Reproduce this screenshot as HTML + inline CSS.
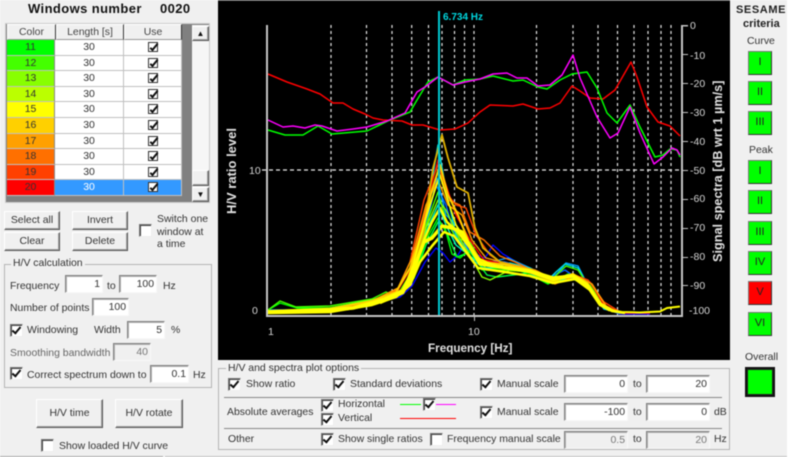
<!DOCTYPE html>
<html><head><meta charset="utf-8"><style>
html,body{margin:0;padding:0;background:#fff}
#p{position:relative;width:787px;height:457px;background:#f0f0f0;overflow:hidden;font:10.45px/14px "Liberation Sans",sans-serif;color:#333;filter:blur(.45px)}
#w{position:absolute;left:0;top:0;width:800px;height:457px;overflow:hidden}
.t{position:absolute;white-space:nowrap;margin-top:2px}
.g{color:#666}
.b{position:absolute;box-sizing:border-box;background:#f0f0f0;border:1px solid;border-color:#fff #555 #555 #fff;box-shadow:inset -1px -1px 0 #a0a0a0;text-align:center;line-height:18px}
.i{position:absolute;box-sizing:border-box;background:#fff;border:1px solid;border-color:#808080 #f8f8f8 #f8f8f8 #808080;box-shadow:inset 1px 1px 0 #b0b0b0;text-align:right;padding-right:2px;line-height:18px}
.i.d{background:#f0f0f0;color:#777}
.c{position:absolute;box-sizing:border-box;width:13px;height:13px;background:#fff;border:1px solid;border-color:#777 #eee #eee #777;box-shadow:inset 1px 1px 0 #444}
.c.o::after{content:"";position:absolute;left:3px;top:0;width:3px;height:7px;border:solid #111;border-width:0 2px 2px 0;transform:rotate(40deg)}
.f{position:absolute;box-sizing:border-box;border:1px solid #b4b4b4}
.s{position:absolute;box-sizing:border-box;width:24px;height:24px;left:748px;background:#00ff00;border:1px solid;border-color:#777 #333 #333 #777;text-align:center;line-height:21px;color:#222;font-size:11px}
.r{position:absolute;left:7px;width:175px;height:16px;background:#fff}
.r>div{position:absolute;top:0;height:16px;text-align:center;line-height:16px;border-right:1px solid #c0c0c0;border-bottom:1px solid #c0c0c0;box-sizing:border-box;color:#333}
.r.q>div{height:15px}
.r .a{left:0;width:48px;border-right:1px solid #888}
.r .l{left:48px;width:69px}
.r .u{left:117px;width:58px}
.m{position:absolute;left:24px;top:2px;width:10px;height:10px;box-sizing:border-box;border:1px solid #333;background:#fff}
.m::after{content:"";position:absolute;left:3px;top:-1px;width:2px;height:7px;border:solid #111;border-width:0 2px 2px 0;transform:rotate(40deg)}
.h{position:absolute;top:24px;height:16px;box-sizing:border-box;background:#f0f0f0;border:1px solid;border-color:#fff #333 #999 #fff;text-align:center;line-height:15px;color:#444}
</style></head><body><div id="w"><div id="p">

<div class="t" style="left:28px;top:-1px;font-weight:bold;font-size:13px;line-height:16px;letter-spacing:.4px;color:#111">Windows number</div>
<div class="t" style="left:160px;top:-1px;font-weight:bold;font-size:13px;line-height:16px;letter-spacing:.4px;color:#111">0020</div>

<div style="position:absolute;left:5px;top:23px;width:205px;height:180px;background:#808080;border:1px solid #ccc;box-sizing:border-box"></div>
<div class="h" style="left:7px;width:49px">Color</div>
<div class="h" style="left:56px;width:68px">Length [s]</div>
<div class="h" style="left:124px;width:58px">Use</div>

<div class="r" style="top:40px"><div class="a" style="background:#00ff00">11</div><div class="l">30</div><div class="u"><span class="m"></span></div></div>
<div class="r q" style="top:56px"><div class="a" style="background:#44ff00">12</div><div class="l">30</div><div class="u"><span class="m"></span></div></div>
<div class="r" style="top:71px"><div class="a" style="background:#88ff00">13</div><div class="l">30</div><div class="u"><span class="m"></span></div></div>
<div class="r q" style="top:87px"><div class="a" style="background:#bbff00">14</div><div class="l">30</div><div class="u"><span class="m"></span></div></div>
<div class="r" style="top:102px"><div class="a" style="background:#ffff00">15</div><div class="l">30</div><div class="u"><span class="m"></span></div></div>
<div class="r" style="top:118px"><div class="a" style="background:#ffd000">16</div><div class="l">30</div><div class="u"><span class="m"></span></div></div>
<div class="r q" style="top:134px"><div class="a" style="background:#ffa000">17</div><div class="l">30</div><div class="u"><span class="m"></span></div></div>
<div class="r" style="top:149px"><div class="a" style="background:#ff7000">18</div><div class="l">30</div><div class="u"><span class="m"></span></div></div>
<div class="r q" style="top:165px"><div class="a" style="background:#ff4000">19</div><div class="l">30</div><div class="u"><span class="m"></span></div></div>
<div class="r" style="top:180px"><div class="a" style="background:#ff0000">20</div><div class="l" style="background:#3399ff;color:#fff">30</div><div class="u" style="background:#3399ff"><span class="m"></span></div></div>

<div style="position:absolute;left:192px;top:25px;width:17px;height:177px;background:#f6f6f6"></div>
<div class="b" style="left:192px;top:26px;width:17px;height:15px;line-height:13px;font-size:8px;color:#111">▲</div>
<div class="b" style="left:192px;top:170px;width:17px;height:16px"></div>
<div class="b" style="left:192px;top:187px;width:17px;height:15px;line-height:13px;font-size:8px;color:#111">▼</div>

<div class="b" style="left:4px;top:211px;width:56px;height:19px">Select all</div>
<div class="b" style="left:72px;top:211px;width:56px;height:19px">Invert</div>
<div class="b" style="left:4px;top:232px;width:56px;height:19px">Clear</div>
<div class="b" style="left:72px;top:232px;width:56px;height:19px">Delete</div>
<div class="c" style="left:139px;top:224px"></div>
<div class="t" style="left:157px;top:212px;line-height:12.7px">Switch one<br>window at<br>a time</div>

<div class="f" style="left:4px;top:264px;width:208px;height:124px"></div>
<div class="t" style="left:11px;top:255px;background:#f0f0f0;padding:0 2px">H/V calculation</div>
<div class="t" style="left:10px;top:278px">Frequency</div>
<div class="i" style="left:65px;top:275px;width:38px;height:18px">1</div>
<div class="t" style="left:107px;top:278px">to</div>
<div class="i" style="left:119px;top:275px;width:38px;height:18px">100</div>
<div class="t" style="left:163px;top:278px">Hz</div>
<div class="t" style="left:10px;top:300px">Number of points</div>
<div class="i" style="left:92px;top:298px;width:37px;height:18px">100</div>
<div class="c o" style="left:10px;top:324px"></div>
<div class="t" style="left:27px;top:322px">Windowing</div>
<div class="t" style="left:94px;top:322px">Width</div>
<div class="i" style="left:127px;top:321px;width:38px;height:18px">5</div>
<div class="t" style="left:171px;top:322px">%</div>
<div class="t g" style="left:10px;top:345px">Smoothing bandwidth</div>
<div class="i d" style="left:113px;top:343px;width:38px;height:18px">40</div>
<div class="c o" style="left:10px;top:367px"></div>
<div class="t" style="left:27px;top:367px">Correct spectrum down to</div>
<div class="i" style="left:150px;top:365px;width:39px;height:18px">0.1</div>
<div class="t" style="left:193px;top:367px">Hz</div>

<div class="b" style="left:36px;top:399px;width:67px;height:29px;line-height:28px">H/V time</div>
<div class="b" style="left:115px;top:399px;width:68px;height:29px;line-height:28px">H/V rotate</div>
<div class="c" style="left:41px;top:439px"></div>
<div class="t" style="left:59px;top:438px">Show loaded H/V curve</div>

<div style="position:absolute;left:0;top:456px;width:163px;height:1px;background:#a8a8a8"></div>
<div style="position:absolute;left:165px;top:456px;width:622px;height:1px;background:#c0c0c0"></div>

<!-- plot -->
<svg style="position:absolute;left:218px;top:0" width="512" height="360" viewBox="218 0 512 360" font-family="Liberation Sans, sans-serif">
<rect x="218" y="0" width="512" height="360" fill="#000"/>
<rect x="218" y="0" width="512" height="1" fill="#555"/>
<g stroke="#e8e8e8" stroke-width="1.2" stroke-dasharray="3 3" fill="none">
<path d="M331 25V315M366.500 25V315M392 25V315M411.700 25V315M428.500 25V315M442 25V315M454.500 25V315M464.500 25V315M474 25V315M536.500 25V315M573 25V315M598 25V315M617.500 25V315M634 25V315M648 25V315M661 25V315M671 25V315"/>
</g>
<path d="M262 170H682" stroke="#e8e8e8" stroke-width="1.2" stroke-dasharray="4 3" fill="none"/>
<g fill="none" stroke-width="1.4" stroke-linejoin="round">
<polyline stroke="#0000ff" points="268,311 330,310 370,304 400,297 412,286 425,262 436,248 443,253 450,262 458,255 464,245 475,254 485,258 493,245 503,254 513,260 530,270 553,281 570,277 587,284 598,298 607,309 620,314 650,314"/>
<polyline stroke="#0060ff" points="268,312 330,311 372,302 398,293 410,280 422,240 436,185 446,205 456,240 470,258 485,262 505,262 525,268 548,278 565,270 585,284 596,297 606,309 620,314"/>
<polyline stroke="#00a0ff" points="268,310 330,310 372,303 400,293 412,276 424,235 437,178 446,215 456,225 468,250 482,264 508,258 530,268 552,280 566,263 578,266 590,290 604,309 620,313"/>
<polyline stroke="#00e0e0" points="268,311 330,309 372,302 400,292 414,270 426,215 438,145 446,190 456,235 470,258 486,270 510,263 530,268 550,278 556,272 565,264 578,268 590,290 604,309 620,313 650,312"/>
<polyline stroke="#00ffc0" points="268,311 330,310 372,302 400,294 414,272 426,232 438,205 446,225 456,245 470,256 486,268 510,268 530,274 550,282 570,278 590,286 606,308 620,313"/>
<polyline stroke="#00ff40" points="268,311 330,311 372,304 400,295 414,278 426,245 438,222 444,226 457,257 470,252 487,275 497,277 513,275 537,272 547,283 570,275 590,286 606,308 620,313"/>
<polyline stroke="#00ff00" points="268,310 280,303 297,308 330,308 372,301 396,294 412,282 426,240 438,218 446,232 452,254 460,258 472,248 482,270 500,268 525,272 548,284 568,274 590,285 606,308 620,313"/>
<polyline stroke="#44ff00" points="268,310 280,301 296,307 330,306 372,299 386,292 394,296 404,288 414,270 426,225 438,192 446,220 456,238 470,242 486,270 505,270 530,272 548,283 566,266 578,270 590,288 606,308"/>
<polyline stroke="#88ff00" points="268,311 330,308 372,300 400,291 414,268 426,228 438,200 446,210 456,232 468,252 482,277 490,280 510,270 535,272 552,282 570,276 590,286 606,308"/>
<polyline stroke="#ff0000" points="268,312 330,311 372,303 398,290 410,270 424,215 438,160 446,185 456,215 470,240 484,260 505,264 530,272 552,280 570,276 590,282 604,305 620,313 650,313"/>
<polyline stroke="#ff4000" points="268,312 330,310 372,302 398,288 410,262 424,200 438,165 448,195 456,205 466,208 476,235 490,255 505,265 530,273 552,280 572,274 588,280 604,302 620,312"/>
<polyline stroke="#ff7000" points="268,311 330,310 372,302 398,289 412,265 426,210 438,170 448,200 460,205 470,232 484,240 500,256 515,262 535,272 555,284 575,276 592,284 606,306 620,313"/>
<polyline stroke="#ffa000" points="268,311 330,309 372,301 398,288 412,258 426,205 438,180 448,205 462,215 472,240 486,258 510,264 535,270 555,280 575,275 592,284 606,306 620,313"/>
<polyline stroke="#e0b000" stroke-width="1.8" points="380,298 407,288 413,268 423,235 433,168 442,135 448,158 457,187 468,193 475,228 483,248 500,262 530,272 553,282 570,275 587,282 600,305 613,311"/>
<polyline stroke="#ffd000" stroke-width="2" points="268,311 330,309 372,301 396,292 410,268 422,232 432,190 440,165 448,195 458,215 470,245 482,262 507,265 530,270 553,279 573,274 587,283 600,303 612,310"/>
<polyline stroke="#ffff00" stroke-width="1.6" points="380,302 403,290 413,265 423,228 430,205 440,175 447,198 456,225 466,240 478,258 500,268"/>
<polyline stroke="#ffff00" stroke-width="2.500" points="380,303 403,293 414,272 424,240 432,222 440,208 447,222 458,232 470,248 480,262 506,268 530,272 553,280 573,276 587,285"/>
<polyline stroke="#ffff00" stroke-width="3.500" points="268,312 300,311 330,310 353,308 372,303 385,299 403,291 414,268 424,242 432,238 442,226 452,228 462,232 470,247 480,264 507,268 530,271 553,278 573,276 587,285 600,304 610,310"/>
<polyline stroke="#ffff00" stroke-width="2.500" points="268,313 330,312 372,305 396,297 410,285 420,262 432,246 444,232 454,236 466,252 478,268 505,272 530,276 553,283 575,279 590,290 600,305 612,311 625,313"/>
<polyline stroke="#ffff00" stroke-width="2" points="610,310 622,312 640,312.500 660,311.500 667,308 680,306.500"/>
</g>
<g fill="none" stroke-width="1.500" stroke-linejoin="round">
<polyline stroke="#ff0000" points="268,74 287,82 307,89 320,94 333,103 343,103 353,109 365,114 373,118 383,120 402,121 412,125 423,125 440,130 455,129 468,123 480,112 490,105 513,106 523,104 538,109 550,108 560,103 572,86 580,91 590,98 603,99 615,90 631,62 637,77 647,107 658,122 670,126 680,136"/>
<polyline stroke="#00ff00" points="268,130 285,135 303,135 318,126 332,134 367,131 390,120 410,112 417,100 428,82 438,77 453,85 465,80 480,79 493,76 513,81 523,80 538,87 547,89 560,80 572,74 587,72 597,88 607,113 617,123 630,105 640,127 655,157 663,155 670,149 677,150 680,157"/>
<polyline stroke="#ff00ff" points="268,120 283,127 293,126 305,128 315,125 322,126 337,131 353,129 367,127 387,121 405,113 417,92 425,87 438,77 453,85 465,82 480,79 493,74 507,73 517,78 527,78 538,86 550,85 562,75 573,55 580,78 597,117 610,138 618,133 630,107 640,133 654,164 663,157 672,148 677,150 680,155"/>
</g>
<rect x="438" y="11" width="2" height="305" fill="#00c8d0"/>
<g fill="#c4c4c4">
<rect x="266" y="25" width="2" height="292"/>
<rect x="266" y="315" width="417" height="2"/>
<rect x="681" y="25" width="2" height="292"/>
<rect x="683" y="25" width="5" height="1.500"/><rect x="683" y="54" width="5" height="1"/><rect x="683" y="83" width="5" height="1"/><rect x="683" y="112" width="5" height="1"/><rect x="683" y="141" width="5" height="1"/><rect x="683" y="170" width="5" height="1"/><rect x="683" y="199" width="5" height="1"/><rect x="683" y="228" width="5" height="1"/><rect x="683" y="257" width="5" height="1"/><rect x="683" y="285" width="5" height="1"/>
<rect x="474" y="317" width="1" height="4"/>
</g>
<g fill="#d4d4d4" font-size="10.500">
<text x="249" y="174">10</text><text x="252" y="314">0</text><text x="268" y="335">1</text><text x="468" y="335">10</text>
<text x="690" y="29">0</text><text x="690" y="59">-10</text><text x="690" y="87">-20</text><text x="690" y="116">-30</text><text x="690" y="145">-40</text><text x="690" y="174">-50</text><text x="690" y="202">-60</text><text x="690" y="231">-70</text><text x="690" y="260">-80</text><text x="690" y="289">-90</text><text x="689" y="314">-100</text>
</g>
<text x="443" y="20" fill="#00d8e0" font-size="10" font-weight="bold">6.734 Hz</text>
<text x="428" y="352" fill="#e0e0e0" font-size="11.700" font-weight="bold">Frequency [Hz]</text>
<text transform="translate(236,214) rotate(-90)" fill="#e0e0e0" font-size="13" font-weight="bold">H/V ratio level</text>
<text transform="translate(722,262) rotate(-90)" fill="#e0e0e0" font-size="12.700" font-weight="bold">Signal spectra [dB wrt 1 µm/s]</text>
</svg>

<!-- options -->
<div class="f" style="left:218px;top:368px;width:512px;height:82px"></div>
<div class="t" style="left:226px;top:360px;background:#f0f0f0;padding:0 2px">H/V and spectra plot options</div>
<div class="c o" style="left:228px;top:378px"></div><div class="t" style="left:246px;top:376px">Show ratio</div>
<div class="c o" style="left:333px;top:378px"></div><div class="t" style="left:350px;top:376px">Standard deviations</div>
<div class="c o" style="left:480px;top:378px"></div><div class="t" style="left:497px;top:376px">Manual scale</div>
<div class="i" style="left:564px;top:375px;width:64px;height:18px">0</div><div class="t" style="left:633px;top:376px">to</div>
<div class="i" style="left:646px;top:375px;width:64px;height:18px">20</div>
<div style="position:absolute;left:224px;top:396.500px;width:498px;height:1px;background:#888"></div>
<div class="t" style="left:227px;top:404px">Absolute averages</div>
<div class="c o" style="left:321px;top:399px"></div><div class="t" style="left:338px;top:396px">Horizontal</div>
<div class="c o" style="left:321px;top:413px"></div><div class="t" style="left:338px;top:410px">Vertical</div>
<div style="position:absolute;left:400px;top:404px;width:21px;height:1px;background:#00ff00"></div>
<div class="c o" style="left:423px;top:398px"></div>
<div style="position:absolute;left:436px;top:404px;width:20px;height:1px;background:#ff00ff"></div>
<div style="position:absolute;left:400px;top:418px;width:56px;height:1px;background:#ff0000"></div>
<div class="c o" style="left:480px;top:406px"></div><div class="t" style="left:497px;top:404px">Manual scale</div>
<div class="i" style="left:564px;top:403px;width:64px;height:18px">-100</div><div class="t" style="left:633px;top:404px">to</div>
<div class="i" style="left:646px;top:403px;width:64px;height:18px">0</div><div class="t" style="left:714px;top:404px">dB</div>
<div style="position:absolute;left:224px;top:427.500px;width:498px;height:1px;background:#888"></div>
<div class="t" style="left:228px;top:431px">Other</div>
<div class="c o" style="left:321px;top:433px"></div><div class="t" style="left:338px;top:431px">Show single ratios</div>
<div class="c" style="left:430px;top:433px"></div><div class="t" style="left:447px;top:431px">Frequency manual scale</div>
<div class="i d" style="left:564px;top:431px;width:64px;height:18px">0.5</div><div class="t" style="left:633px;top:431px">to</div>
<div class="i d" style="left:646px;top:431px;width:64px;height:18px">20</div><div class="t" style="left:714px;top:431px">Hz</div>

<!-- SESAME -->
<div class="t" style="left:736px;top:1px;font-size:11px;font-weight:bold;letter-spacing:.6px;color:#222">SESAME</div>
<div class="t" style="left:743px;top:15px;font-size:11px;font-weight:bold;color:#222">criteria</div>
<div class="t" style="left:747px;top:33px">Curve</div>
<div class="s" style="top:51px">I</div>
<div class="s" style="top:81px">II</div>
<div class="s" style="top:111px">III</div>
<div class="t" style="left:749px;top:142px">Peak</div>
<div class="s" style="top:160px">I</div>
<div class="s" style="top:190px">II</div>
<div class="s" style="top:221px">III</div>
<div class="s" style="top:251px">IV</div>
<div class="s" style="top:281px;background:#ff0000">V</div>
<div class="s" style="top:312px">VI</div>
<div class="t" style="left:745px;top:349px">Overall</div>
<div style="position:absolute;left:745px;top:367px;width:30px;height:30px;box-sizing:border-box;background:#00ff00;border:2px solid #111;box-shadow:inset 0 0 0 1px #222"></div>

</div></div></body></html>
